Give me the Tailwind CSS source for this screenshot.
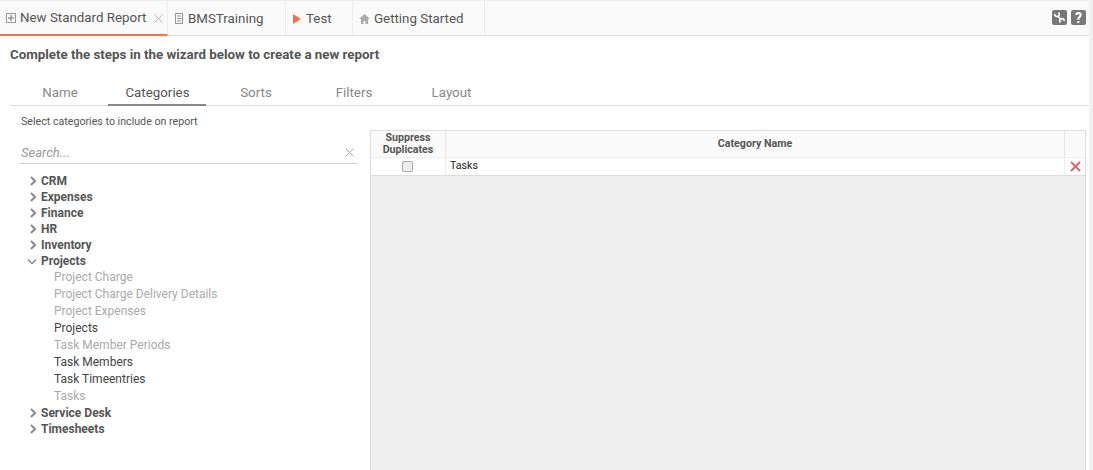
<!DOCTYPE html>
<html lang="en">
<head>
    <meta charset="UTF-8">
    <title>New Standard Report</title>
    <script src="https://cdn.jsdelivr.net/npm/@tailwindcss/browser@4"></script>
</head>
<body class="h-[470px] overflow-hidden bg-white font-['Roboto',sans-serif] text-[#555]">
    <div class="flex h-[470px]">
        <div class="flex-1 min-w-0 flex flex-col">
            <!-- tab bar -->
            <div class="h-9 flex justify-between bg-[#fafafa] border-t border-t-[#eee] border-b border-b-[#ddd] shrink-0">
                <div class="flex text-[13.33px] whitespace-nowrap">
                    <div class="w-[168px] h-[35px] flex items-center pl-[6px] pt-px border-b-2 border-b-[#f9704f] border-r border-r-[#eee]">
                        <svg class="w-[10px] h-[10px] mr-1 shrink-0" viewBox="0 0 10 10" fill="none" stroke="#999"><rect x=".5" y=".5" width="9" height="9"/><path d="M5 2v6M2 5h6" stroke-width="1.500"/></svg>
                        <span>New Standard Report</span>
                        <svg class="w-[9px] h-[9px] ml-[8px]" viewBox="0 0 9 9" stroke="#bbb" fill="none"><path d="M.5.5l8 8M8.5.5l-8 8"/></svg>
                    </div>
                    <div class="w-[118px] flex items-center pl-[7px] pt-px border-r border-[#eee]">
                        <svg class="w-[8px] h-[11px] mr-[5px]" viewBox="0 0 8 11" fill="none" stroke="#999"><rect x=".5" y=".5" width="7" height="10"/><path d="M2 3h4M2 5.500h4M2 8h4"/></svg>
                        <span>BMSTraining</span>
                    </div>
                    <div class="w-[67px] flex items-center pl-[7px] pt-px border-r border-[#eee]">
                        <svg class="w-[8px] h-[10px] mr-[5px]" viewBox="0 0 8 10" fill="#f9704f"><path d="M0 0l8 5-8 5z"/></svg>
                        <span>Test</span>
                    </div>
                    <div class="w-[132px] flex items-center pl-[6px] pt-px border-r border-[#eee]">
                        <svg class="w-[11px] h-[10px] mr-[4px]" viewBox="0 0 11 10" fill="#aaa"><path d="M5.500 0l5.500 5H9v5H6.500V7h-2v3H2V5H0z"/></svg>
                        <span>Getting Started</span>
                    </div>
                </div>
                <div class="flex items-center gap-[4px] pr-[3px] pb-[1px]">
                    <div class="w-[15px] h-[15px] bg-[#777] rounded-[2px] flex items-center justify-center">
                        <svg class="w-[13px] h-[13px]" viewBox="0 0 13 13" fill="none" stroke="#fff" stroke-width="1.600"><path d="M4.500 5l4.500 4"/><path d="M1.800 2.800c-.3 2 1.500 3.300 3.200 2.500s1.700-2.700.5-3.800"/><path d="M11.200 10.200c.3-2-1.500-3.300-3.200-2.500s-1.700 2.700-.5 3.800"/></svg>
                    </div>
                    <div class="w-[15px] h-[15px] bg-[#777] rounded-[2px] flex items-center justify-center text-white text-[14px] font-bold leading-none">?</div>
                </div>
            </div>

            <div class="flex-1 min-h-0 flex flex-col pl-[10px]">
                <h1 class="text-[13.33px] font-bold leading-4 mt-[11px]">Complete the steps in the wizard below to create a new report</h1>
                <!-- wizard steps -->
                <div class="flex mt-[17px] h-[26px] border-b border-[#ddd] text-[13.33px] text-[#888]">
                    <div class="w-[98px] text-center pt-[3px] pl-[2px]">Name</div>
                    <div class="w-[98px] h-[26px] text-center pt-[3px] pl-[1px] border-b-2 border-[#888] text-[#555]">Categories</div>
                    <div class="w-[99px] text-center pt-[3px] pl-[1px]">Sorts</div>
                    <div class="w-[97px] text-center pt-[3px] pl-[1px]">Filters</div>
                    <div class="w-[98px] text-center pt-[3px] pl-[1px]">Layout</div>
                </div>
                <div class="flex flex-1 min-h-0">
                    <!-- left tree -->
                    <div class="w-[360px] shrink-0 pl-[10px]">
                        <p class="text-[10.67px] leading-[14px] mt-[9px] pl-px">Select categories to include on report</p>
                        <div class="mt-[12px] w-[337px] h-[23px] border-b border-[#ccc] flex items-center justify-between pr-[3px] pt-px">
                            <span class="text-[13px] italic text-[#999] pl-px">Search...</span>
                            <svg class="w-[9px] h-[9px]" viewBox="0 0 9 9" stroke="#aaa" fill="none"><path d="M.5.5l8 8M8.5.5l-8 8"/></svg>
                        </div>
                        <ul class="mt-[9px] text-[12px]">
                            <li class="flex items-center h-4 font-bold"><svg class="w-[7px] h-[10px] ml-[10px] mr-[4px]" viewBox="0 0 7 10" fill="none" stroke="#888" stroke-width="2"><path d="M1 1l4 4-4 4"/></svg>CRM</li>
                            <li class="flex items-center h-4 font-bold"><svg class="w-[7px] h-[10px] ml-[10px] mr-[4px]" viewBox="0 0 7 10" fill="none" stroke="#888" stroke-width="2"><path d="M1 1l4 4-4 4"/></svg>Expenses</li>
                            <li class="flex items-center h-4 font-bold"><svg class="w-[7px] h-[10px] ml-[10px] mr-[4px]" viewBox="0 0 7 10" fill="none" stroke="#888" stroke-width="2"><path d="M1 1l4 4-4 4"/></svg>Finance</li>
                            <li class="flex items-center h-4 font-bold"><svg class="w-[7px] h-[10px] ml-[10px] mr-[4px]" viewBox="0 0 7 10" fill="none" stroke="#888" stroke-width="2"><path d="M1 1l4 4-4 4"/></svg>HR</li>
                            <li class="flex items-center h-4 font-bold"><svg class="w-[7px] h-[10px] ml-[10px] mr-[4px]" viewBox="0 0 7 10" fill="none" stroke="#888" stroke-width="2"><path d="M1 1l4 4-4 4"/></svg>Inventory</li>
                            <li class="flex items-center h-4 font-bold"><svg class="w-[10px] h-[7px] ml-[7px] mr-[4px]" viewBox="0 0 10 7" fill="none" stroke="#888" stroke-width="1.500"><path d="M1 1.500l4 4 4-4"/></svg>Projects</li>
                            <li class="h-[17px] leading-[17px] pl-[34px] text-[#aaa]">Project Charge</li>
                            <li class="h-[17px] leading-[17px] pl-[34px] text-[#aaa]">Project Charge Delivery Details</li>
                            <li class="h-[17px] leading-[17px] pl-[34px] text-[#aaa]">Project Expenses</li>
                            <li class="h-[17px] leading-[17px] pl-[34px] text-[#444]">Projects</li>
                            <li class="h-[17px] leading-[17px] pl-[34px] text-[#aaa]">Task Member Periods</li>
                            <li class="h-[17px] leading-[17px] pl-[34px] text-[#444]">Task Members</li>
                            <li class="h-[17px] leading-[17px] pl-[34px] text-[#444]">Task Timeentries</li>
                            <li class="h-[17px] leading-[17px] pl-[34px] text-[#aaa]">Tasks</li>
                            <li class="flex items-center h-4 font-bold"><svg class="w-[7px] h-[10px] ml-[10px] mr-[4px]" viewBox="0 0 7 10" fill="none" stroke="#888" stroke-width="2"><path d="M1 1l4 4-4 4"/></svg>Service Desk</li>
                            <li class="flex items-center h-4 font-bold"><svg class="w-[7px] h-[10px] ml-[10px] mr-[4px]" viewBox="0 0 7 10" fill="none" stroke="#888" stroke-width="2"><path d="M1 1l4 4-4 4"/></svg>Timesheets</li>
                        </ul>
                    </div>
                    <!-- selected grid -->
                    <div class="flex-1 min-w-0 mt-[24px] mr-[3px] border-l border-t border-r border-[#ddd] bg-[#eee] flex flex-col">
                        <div class="flex h-[27px] bg-[#fafafa] border-b border-[#eee] text-[10.67px] font-bold leading-3 text-center">
                            <div class="w-[75px] border-r border-[#e5e5e5] flex items-center justify-center">Suppress<br>Duplicates</div>
                            <div class="flex-1 flex items-center justify-center">Category Name</div>
                            <div class="w-[21px] border-l border-[#e5e5e5]"></div>
                        </div>
                        <div class="flex h-[18px] bg-white border-b border-[#ddd] text-[10.67px] text-[#222]">
                            <div class="w-[75px] border-r border-[#eee] flex items-center justify-center pr-px pb-px"><span class="w-[11px] h-[11px] rounded-[2px] border border-[#aaa] bg-[#eee]"></span></div>
                            <div class="flex-1 pl-[4px] leading-[15px]">Tasks</div>
                            <div class="w-[21px] border-l border-[#eee] flex items-center justify-center pb-px">
                                <svg class="w-[11px] h-[11px]" viewBox="0 0 11 11" stroke="#e0636b" stroke-width="2" fill="none"><path d="M1 1l9 9M10 1l-9 9"/></svg>
                            </div>
                        </div>
                    </div>
                </div>
            </div>
        </div>
        <!-- page scrollbar track -->
        <div class="w-[4px] shrink-0 bg-[#f1f1f1]"></div>
    </div>
</body>
</html>
